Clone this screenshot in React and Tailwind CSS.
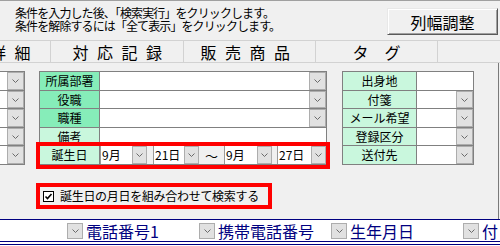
import React from "react";

function Chevron() {
  return (
    <svg width="7" height="4" viewBox="0 0 7 4">
      <polyline points="0.5,0.5 3.5,3.5 6.5,0.5" fill="none" stroke="#6a6a6a" strokeWidth="1" />
    </svg>
  );
}

function DD({ className }) {
  return (
    <div className={"flex items-center justify-center bg-[#e1e1e1] border border-[#adadad] " + className}>
      <Chevron />
    </div>
  );
}

const H = ["h-[19px]", "h-[18px]", "h-[19px]", "h-[18px]", "h-[19px]"];

function Combo({ w, text }) {
  return (
    <div className={"flex h-full bg-white border-l border-[#9a9a9a] " + w}>
      <div className="flex-1 text-[12px] leading-[17px] pl-[1px] whitespace-nowrap overflow-hidden">{text}</div>
      <DD className="w-[15px] h-full" />
    </div>
  );
}

export default function App() {
  const mid = [
    { t: "所属部署", bg: "bg-[#86edb9]", dd: true },
    { t: "役職", bg: "bg-[#86edb9]", dd: true },
    { t: "職種", bg: "bg-[#86edb9]", dd: true },
    { t: "備考", bg: "bg-[#c9f7dd]", dd: false },
  ];
  const right = [
    { t: "出身地", dd: false },
    { t: "付箋", dd: true },
    { t: "メール希望", dd: true },
    { t: "登録区分", dd: true },
    { t: "送付先", dd: true },
  ];
  return (
    <div className="w-[500px] h-[246px] bg-[#f0f0f0] overflow-hidden text-black font-['Noto_Sans_CJK_JP','Noto_Sans',sans-serif] flex flex-col">
      {/* top section */}
      <div className="h-[40px] shrink-0 border-t border-[#a0a0a0] flex">
        <div className="pl-[15px] pt-[5px] text-[12px] leading-[13px] tracking-[-0.9px] whitespace-nowrap">
          <div>条件を入力した後、「検索実行」をクリックします。</div>
          <div>条件を解除するには「全て表示」をクリックします。</div>
        </div>
        <button className="ml-auto mr-[2px] mt-[7px] w-[111px] h-[27px] bg-[#f0f0f0] border border-t-[#e8e8e8] border-l-[#e8e8e8] border-r-[#5a5a5a] border-b-[#5a5a5a] shadow-[inset_1px_1px_0_#ffffff,inset_-1px_-1px_0_#a0a0a0] text-[16px] leading-none flex items-center justify-center">
          列幅調整
        </button>
      </div>

      {/* tabs */}
      <div className="h-[23px] shrink-0 flex border-y border-[#d2d2d2] text-[16px] leading-none whitespace-nowrap">
        <div className="w-[51px] border-r border-[#d2d2d2] flex items-center justify-end pr-[11px] overflow-hidden tracking-[8.5px]">
          詳細
        </div>
        <div className="w-[133px] border-r border-[#d2d2d2] flex items-center justify-center pl-[9px] tracking-[8.5px]">
          対応記録
        </div>
        <div className="w-[132px] border-r border-[#d2d2d2] flex items-center justify-center tracking-[8.5px]">
          販売商品
        </div>
        <div className="w-[122px] border-r border-[#d2d2d2] flex items-center justify-center">
          タ　グ
        </div>
      </div>

      {/* form */}
      <div className="h-[156px] w-[499px] shrink-0 border-r border-[#7a7a7a] flex flex-col">
        <div className="mt-[8px] flex items-start">
          {/* left partial */}
          <div className="w-[25px] border-t border-r border-[#808080]">
            {H.map((h, i) => (
              <div key={i} className={"flex border-b border-[#808080] " + h}>
                <div className="w-[7px] bg-white" />
                <DD className="w-[17px] h-full" />
              </div>
            ))}
          </div>

          {/* middle */}
          <div className="ml-[14px] w-[288px] border-t border-l border-r border-[#808080] text-[12px]">
            {mid.map((r, i) => (
              <div key={i} className={"flex border-b border-[#808080] " + H[i]}>
                <div className={"w-[60px] border-r border-[#808080] flex items-center justify-center leading-none " + r.bg}>
                  {r.t}
                </div>
                <div className="flex-1 bg-white" />
                {r.dd && <DD className="w-[17px] h-full" />}
              </div>
            ))}
            <div className={"flex border-b border-[#808080] outline-4 outline-[#ff0000] " + H[4]}>
              <div className="w-[60px] border-r border-[#808080] flex items-center justify-center leading-none bg-[#c9f7dd]">
                誕生日
              </div>
              <div className="flex-1 flex items-stretch">
                <Combo w="w-[47px]" text="9月" />
                <div className="w-[6px]" />
                <Combo w="w-[46px]" text="21日" />
                <div className="w-[25px] flex items-center justify-center text-[13px] leading-none">〜</div>
                <Combo w="w-[48px]" text="9月" />
                <div className="w-[5px]" />
                <Combo w="w-[49px]" text="27日" />
              </div>
            </div>
          </div>

          {/* right */}
          <div className="ml-[15px] w-[132px] border-t border-l border-r border-[#808080] text-[12px]">
            {right.map((r, i) => (
              <div key={i} className={"flex border-b border-[#808080] " + H[i]}>
                <div className="w-[74px] border-r border-[#808080] flex items-center justify-center leading-none bg-[#c9f7dd] whitespace-nowrap">
                  {r.t}
                </div>
                <div className="flex-1 bg-white" />
                {r.dd && <DD className="w-[17px] h-full" />}
              </div>
            ))}
          </div>
        </div>

        {/* checkbox */}
        <div className="mt-[22px] ml-[40px] w-[228px] h-[18px] outline-4 outline-[#ff0000] flex items-center">
          <div className="ml-[3px] w-[11px] h-[11px] border border-black bg-white flex items-center justify-center">
            <svg width="9" height="9" viewBox="0 0 9 9">
              <polyline points="1.5,4.5 3.5,6.5 7.5,2" fill="none" stroke="#000" strokeWidth="1.6" />
            </svg>
          </div>
          <div className="ml-[6px] text-[12px] leading-none whitespace-nowrap tracking-[-0.3px]">
            誕生日の月日を組み合わせて検索する
          </div>
        </div>
      </div>

      {/* bottom header */}
      <div className="h-[27px] shrink-0 bg-white border-t border-[#000080]">
        <div className="h-[22px] border-b border-[#000080] flex items-center pl-[67px] text-[16px] leading-none text-[#000080] whitespace-nowrap">
          {["電話番号1", "携帯電話番号", "生年月日", "付"].map((t, i) => (
            <div key={i} className="w-[132px] shrink-0 flex items-center gap-[3px]">
              <DD className="w-[16px] h-[16px]" />
              <span>{t}</span>
            </div>
          ))}
        </div>
        <div className="h-[2px]" />
        <div className="h-[1px] bg-[#000080]" />
      </div>
    </div>
  );
}
